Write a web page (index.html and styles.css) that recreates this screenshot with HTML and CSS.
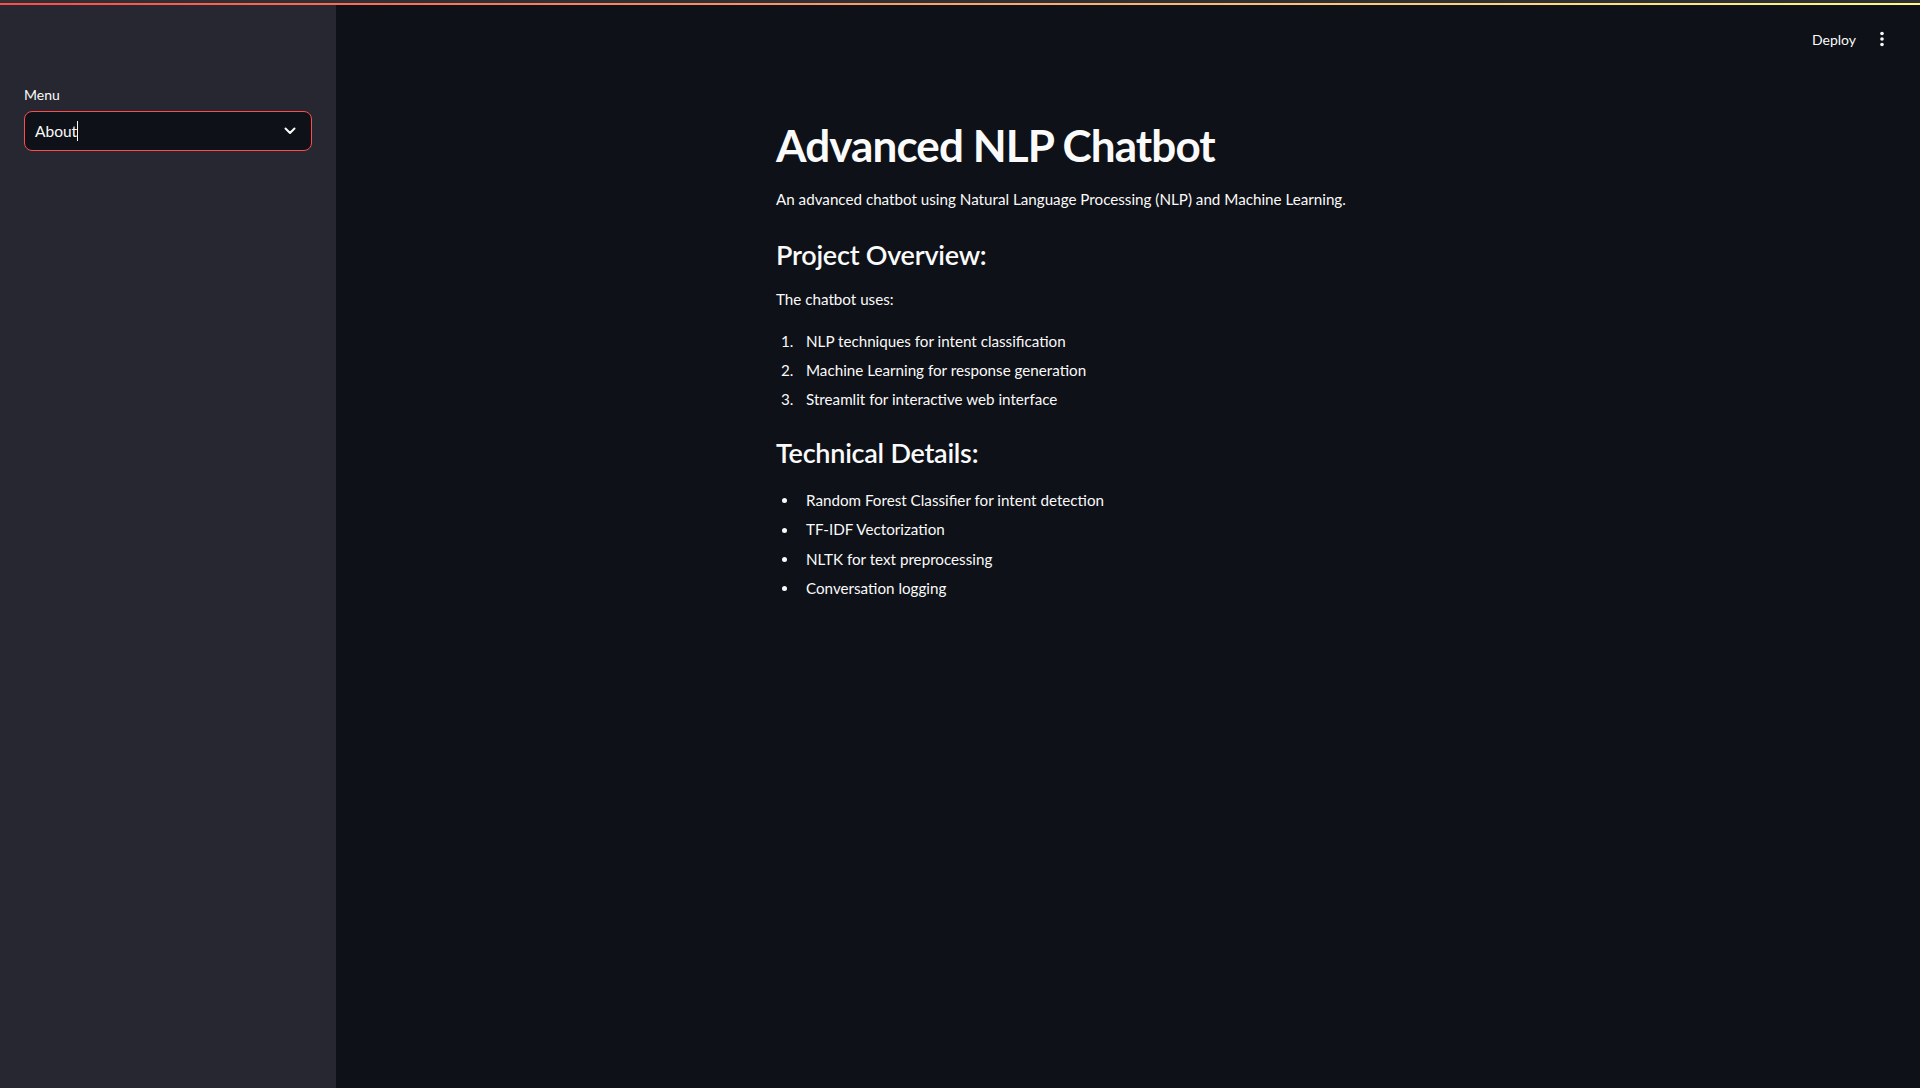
FILE: index.html
```html
<!DOCTYPE html>
<html lang="en">
<head>
<meta charset="utf-8">
<title>Advanced NLP Chatbot</title>
<link rel="stylesheet" href="styles.css">
</head>
<body>
<div class="app">
  <div class="top-strip"></div>
  <div class="decoration"></div>
  <div class="layout">
    <aside class="sidebar">
      <label class="field-label">Menu</label>
      <div class="select">
        <span class="select-value">About</span><span class="caret"></span>
        <svg class="chevron" width="12" height="8" viewBox="0 0 12 8"><polyline points="1.5,1.5 6,6 10.5,1.5" fill="none" stroke="#fafafa" stroke-width="2" stroke-linecap="round" stroke-linejoin="round"/></svg>
      </div>
    </aside>
    <main class="main">
      <header class="header">
        <button class="deploy">Deploy</button>
        <svg class="menu-dots" width="8" height="16" viewBox="0 0 8 16"><circle cx="4" cy="2.5" r="1.8" fill="#fafafa"/><circle cx="4" cy="8" r="1.8" fill="#fafafa"/><circle cx="4" cy="13.5" r="1.8" fill="#fafafa"/></svg>
      </header>
      <section class="block">
        <h1 class="title">Advanced NLP Chatbot</h1>
        <p class="text intro">An advanced chatbot using Natural Language Processing (NLP) and Machine Learning.</p>
        <h3 class="subhead first">Project Overview:</h3>
        <p class="text">The chatbot uses:</p>
        <ol class="list numbered">
          <li>NLP techniques for intent classification</li>
          <li>Machine Learning for response generation</li>
          <li>Streamlit for interactive web interface</li>
        </ol>
        <h3 class="subhead second">Technical Details:</h3>
        <ul class="list bullets">
          <li>Random Forest Classifier for intent detection</li>
          <li>TF-IDF Vectorization</li>
          <li>NLTK for text preprocessing</li>
          <li>Conversation logging</li>
        </ul>
      </section>
    </main>
  </div>
</div>
</body>
</html>
```
FILE: styles.css
```css
*, *::before, *::after { box-sizing: border-box; }
html, body {
  margin: 0;
  padding: 0;
  height: 100%;
  background: #0e1117;
  color: #fafafa;
  font-family: Lato, "Noto Sans", "Liberation Sans", sans-serif;
  -webkit-font-smoothing: antialiased;
}
.app {
  display: flex;
  flex-direction: column;
  height: 1088px;
  overflow: hidden;
}
.top-strip {
  height: 3px;
  background: #2f3035;
  flex: none;
}
.decoration {
  height: 2px;
  flex: none;
  background: linear-gradient(90deg, #ff4b4b, #fffd80);
}
.layout {
  display: flex;
  flex: 1;
  min-height: 0;
}
.sidebar {
  width: 336px;
  flex: none;
  background: #262730;
  padding: 78px 24px 0 24px;
  display: flex;
  flex-direction: column;
}
.field-label {
  font-size: 14px;
  line-height: 24px;
  height: 24px;
  margin-bottom: 4px;
  color: #fafafa;
}
.select {
  position: relative;
  width: 288px;
  height: 40px;
  border: 1px solid #ff4b4b;
  border-radius: 8px;
  background: #0e1117;
  display: flex;
  align-items: center;
  padding-left: 10px;
}
.select-value {
  font-size: 15.5px;
  color: #fafafa;
}
.caret {
  display: inline-block;
  width: 1px;
  height: 20px;
  background: #fafafa;
  margin-left: 0;
}
.chevron {
  position: absolute;
  right: 15px;
  top: 15px;
}
.main {
  flex: 1;
  display: flex;
  flex-direction: column;
}
.header {
  height: 60px;
  flex: none;
  display: flex;
  align-items: center;
  justify-content: flex-end;
  padding-right: 34px;
  gap: 22px;
}
.deploy {
  background: transparent;
  border: none;
  color: #fafafa;
  font-family: inherit;
  font-size: 14px;
  padding: 0;
  margin-top: 8px;
}
.menu-dots {
  margin-top: 8px;
}
.block {
  width: 736px;
  margin: 0 auto;
  padding: 54px 16px 0 16px;
}
.title {
  font-size: 44px;
  font-weight: 700;
  line-height: 52.8px;
  margin: 0 0 15px 0;
  letter-spacing: -0.9px;
}
.text {
  font-size: 15.2px;
  line-height: 25.6px;
  margin: 0;
}
.subhead {
  font-size: 27px;
  font-weight: 600;
  line-height: 33.6px;
  margin: 0;
  letter-spacing: -0.25px;
}
.subhead.first { margin-top: 26px; margin-bottom: 15px; }
.subhead.second { margin-top: 23px; margin-bottom: 19px; }
.list {
  list-style: none;
  margin: 16px 0 0 0;
  padding: 0;
  counter-reset: item;
}
.bullets { margin-top: 0; }
.list li {
  display: flex;
  align-items: center;
  font-size: 15.2px;
  line-height: 25.6px;
  margin-bottom: 3.6px;
  counter-increment: item;
}
.numbered li::before {
  content: counter(item) ".";
  width: 30px;
  padding-left: 5px;
  flex: none;
}
.bullets li::before {
  content: "";
  width: 5px;
  height: 5px;
  border-radius: 50%;
  background: #fafafa;
  margin: 0 19px 0 6px;
  flex: none;
}
```
